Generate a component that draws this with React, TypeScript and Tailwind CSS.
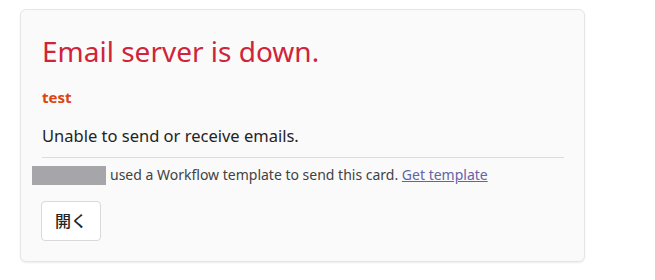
import React from "react";

export default function App() {
  return (
    <div className="w-[655px] h-[280px] bg-white pt-[9px] pl-[20px]" style={{ fontFamily: '"Noto Sans", "Noto Sans CJK JP", sans-serif' }}>
      <div className="w-[565px] h-[253px] rounded-[6px] border border-[#e6e6e6] bg-[#fafafa] shadow-[0_1px_2px_rgba(0,0,0,0.08)] pl-[21px] pr-[20px] pt-[23px]">
        <div className="text-[28px] leading-[36px] text-[#d0243a]">Email server is down.</div>
        <div className="mt-[18px] text-[15px] leading-[20px] font-bold text-[#dc4410]">test</div>
        <div className="mt-[18px] text-[16.5px] leading-[22px] text-[#242424]">Unable to send or receive emails.</div>
        <div className="mt-[10px] border-t border-[#dcdcdc]" />
        <div className="mt-[7px] -ml-[10px] flex items-center text-[14px] leading-[20px] text-[#424242]">
          <span className="inline-block w-[74px] h-[19px] bg-[#a6a6aa] mr-[4px]" />
          <span>used a Workflow template to send this card.&nbsp;</span>
          <span className="text-[#6264a7] underline">Get template</span>
        </div>
        <button className="mt-[16px] -ml-px w-[60px] h-[40px] rounded-[4px] border border-[#d9d9d9] bg-white text-[16px] font-medium text-[#242424]">開く</button>
      </div>
    </div>
  );
}
